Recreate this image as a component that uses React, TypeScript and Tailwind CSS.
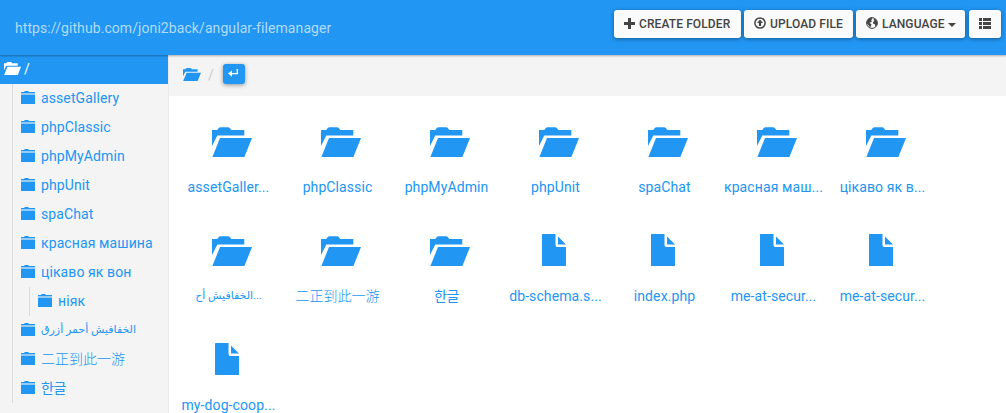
type Entry = { name: string; kind?: "file"; font?: string };

const arabic = "font-[Roboto,'DejaVu_Sans',sans-serif] text-[11px] tracking-normal";
const cjk = "font-[Roboto,'Noto_Sans_CJK_SC',sans-serif] font-light tracking-normal";
const korean = "font-[Roboto,'Noto_Sans_CJK_KR',sans-serif] tracking-[-0.4px]";

const tree: (Entry & { children?: Entry[] })[] = [
  { name: "assetGallery" },
  { name: "phpClassic" },
  { name: "phpMyAdmin" },
  { name: "phpUnit" },
  { name: "spaChat" },
  { name: "красная машина" },
  { name: "цікаво як вон", children: [{ name: "ніяк" }] },
  { name: "الخفافيش أحمر أزرق", font: arabic },
  { name: "二正到此一游", font: cjk },
  { name: "한글", font: korean },
];

const items: Entry[] = [
  { name: "assetGaller..." },
  { name: "phpClassic" },
  { name: "phpMyAdmin" },
  { name: "phpUnit" },
  { name: "spaChat" },
  { name: "красная маш..." },
  { name: "цікаво як в..." },
  { name: "الخفافيش أح...", font: arabic },
  { name: "二正到此一游", font: cjk },
  { name: "한글", font: korean },
  { name: "db-schema.s...", kind: "file" },
  { name: "index.php", kind: "file" },
  { name: "me-at-secur...", kind: "file" },
  { name: "me-at-secur...", kind: "file" },
  { name: "my-dog-coop...", kind: "file" },
];

function OpenFolder({ className }: { className: string }) {
  return (
    <svg viewBox="0 0 40 30" fill="currentColor" preserveAspectRatio="none" className={className}>
      <path d="M0 3H5.2L7 .8Q7.6 .2 8.6 .2H16Q17 .2 17.6 .8L19.3 3H32.3V8.6H5.3L0 19Z" />
      <path d="M8 11H40L32.4 30H.4Z" />
    </svg>
  );
}

function ClosedFolder() {
  return (
    <svg viewBox="0 0 14 13" fill="currentColor" className="mb-[2px] h-[13px] w-[14px] shrink-0">
      <path d="M3 1 3.8 .1H7.2L8 1H14V2H0V1Z" />
      <path d="M0 2H14V4H0Z" opacity=".45" />
      <path d="M0 4H14V13H0Z" />
    </svg>
  );
}

function FileIcon() {
  return (
    <svg viewBox="0 0 24 32" fill="currentColor" className="mr-[3px] h-8 w-6">
      <path d="M.6 0H13.5V10.4Q13.5 13 16 13H24V31.4Q24 32 23.4 32H.6Q0 32 0 31.4V.6Q0 0 .6 0Z" />
      <path d="M16 2.5 24 10.5H16Z" />
    </svg>
  );
}

const button =
  "flex h-7 items-center whitespace-nowrap rounded-[3px] bg-[#fafafa] text-[12px] font-medium leading-none text-[#444] shadow-[0_1px_4px_rgba(0,0,0,0.4)]";

function TreeRow({ entry }: { entry: Entry }) {
  return (
    <div className="flex h-[29px] items-center gap-[6px] pl-2">
      <ClosedFolder />
      <span className={`whitespace-nowrap pb-[2px] leading-5 ${entry.font ?? ""}`}>{entry.name}</span>
    </div>
  );
}

export default function App() {
  return (
    <div className="flex h-[413px] w-[1006px] flex-col overflow-hidden bg-white font-[Roboto,sans-serif] text-[14px] tracking-[0.1px] text-[#2196f3]">
      <header className="z-10 flex h-[55px] shrink-0 items-start justify-between bg-[#2196f3] pl-[15px] pr-[5px] shadow-[0_1px_2px_rgba(0,0,0,0.3)]">
        <span className="pt-[18px] leading-5 tracking-[0.08px] text-[#b2dbfb]">https://github.com/joni2back/angular-filemanager</span>
        <div className="flex pt-[10px]">
          <button className={`${button} mr-[3px] w-[127px] pl-[10px]`}>
            <svg viewBox="0 0 11 11" fill="currentColor" className="mb-px mr-[4px] size-[11px] shrink-0">
              <path d="M4 0H7V4H11V7H7V11H4V7H0V4H4Z" />
            </svg>
            CREATE FOLDER
          </button>
          <button className={`${button} mr-[3px] w-[109px] pl-[10px]`}>
            <svg viewBox="0 0 12 12" fill="currentColor" className="mr-1 size-3 shrink-0 -translate-y-px">
              <circle cx="6" cy="6" r="5.1" fill="none" stroke="currentColor" strokeWidth="1.5" />
              <path d="M6 2.5 9 6H7.1V9H4.9V6H3Z" />
            </svg>
            UPLOAD FILE
          </button>
          <button className={`${button} mr-1 w-[109px] pl-[10px]`}>
            <svg viewBox="0 0 12 12" className="mr-1 size-3 shrink-0 -translate-y-px">
              <circle cx="6" cy="6" r="5.4" fill="#fafafa" stroke="currentColor" strokeWidth="1" />
              <path fill="currentColor" d="M.7 4.5 2.5 1.5 5.7.6 6.5 2 5 3 6 4.2 4.5 5.5 3.2 5.7 5.5 7.2 5 9 4 11 3.2 9 1 6.5ZM8 1.2 10.5 3 11.4 6 10.4 9 9.2 9.5 9 7.2 7.2 6.8 7 5 8.6 4 7.6 3Z" />
            </svg>
            LANGUAGE
            <svg viewBox="0 0 8 4" fill="currentColor" className="ml-[3px] mt-px h-1 w-2 shrink-0">
              <path d="M0 0H8L4 4Z" />
            </svg>
          </button>
          <button className={`${button} w-8 justify-center`}>
            <svg viewBox="0 0 12 11" fill="currentColor" className="mb-px h-[11px] w-3">
              <path d="M0 0H3V3H0ZM4 0H12V3H4ZM0 4H3V7H0ZM4 4H12V7H4ZM0 8H3V11H0ZM4 8H12V11H4Z" />
            </svg>
          </button>
        </div>
      </header>

      <div className="flex min-h-0 flex-1">
        <aside className="w-[169px] shrink-0 border-r border-[#eaeaea] bg-[#f4f4f4]">
          <div className="flex h-[29px] items-center gap-[3px] bg-[#2196f3] pl-1 text-white">
            <OpenFolder className="mb-[2px] h-[13px] w-[17px]" />
            <span>/</span>
          </div>
          <nav className="ml-3 border-l border-[#dcdcdc]">
            {tree.map((entry) => (
              <div key={entry.name}>
                <TreeRow entry={entry} />
                {entry.children && (
                  <div className="ml-4 border-l border-[#dcdcdc]">
                    {entry.children.map((child) => (
                      <TreeRow key={child.name} entry={child} />
                    ))}
                  </div>
                )}
              </div>
            ))}
          </nav>
        </aside>

        <main className="flex-1">
          <div className="flex h-[41px] items-start bg-[#f4f4f4] pl-[14px]">
            <OpenFolder className="mt-[13px] h-[13px] w-[18px]" />
            <span className="ml-[7px] mt-[10px] leading-5 text-[#ccc]">/</span>
            <button className="ml-[9px] mt-[9px] flex h-5 w-[22px] justify-center rounded-[3px] bg-[#2196f3] pt-[5px] text-white shadow-[0_1px_4px_rgba(0,0,0,0.4)]">
              <svg viewBox="0 0 10 8" fill="none" stroke="currentColor" strokeWidth="1.4" className="-ml-px h-2 w-[10px]">
                <path d="M9.3 0V4.6H2" />
                <path d="M4 1.4V7.8L0 4.6Z" fill="currentColor" stroke="none" />
              </svg>
            </button>
          </div>
          <div className="grid grid-cols-[repeat(7,109px)] pl-[5px]">
            {items.map((item, i) => (
              <div key={i} className="flex h-[109px] flex-col items-center pt-[29px]">
                <div className="flex h-[52px] items-start">
                  {item.kind === "file" ? <FileIcon /> : <OpenFolder className="ml-[7px] mt-[2px] h-[30px] w-10" />}
                </div>
                <span className={`whitespace-nowrap leading-5 ${item.font ?? ""}`}>{item.name}</span>
              </div>
            ))}
          </div>
        </main>
      </div>
    </div>
  );
}
